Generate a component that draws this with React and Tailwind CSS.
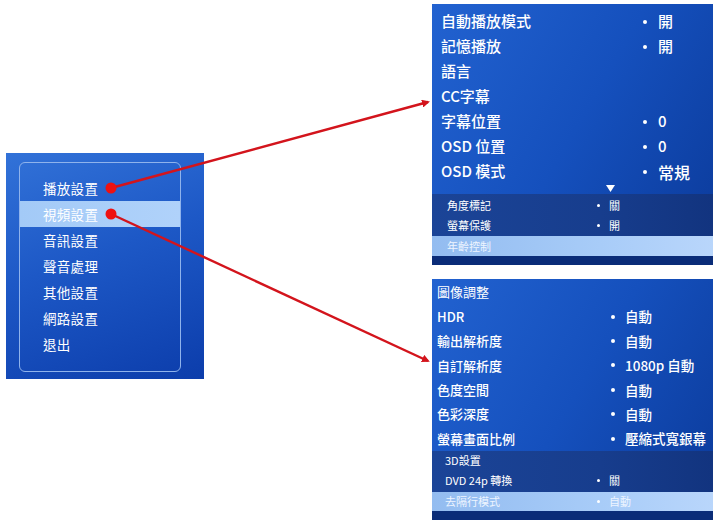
import React from "react";

const font = { fontFamily: '"Noto Sans CJK TC", "Noto Sans", sans-serif' };

const mainMenu = ["播放設置", "視頻設置", "音訊設置", "聲音處理", "其他設置", "網路設置", "退出"];

const playRows = [
  { label: "自動播放模式", value: "開" },
  { label: "記憶播放", value: "開" },
  { label: "語言" },
  { label: "CC字幕" },
  { label: "字幕位置", value: "0" },
  { label: "OSD 位置", value: "0" },
  { label: "OSD 模式", value: "常規", big: true },
];

const videoRows = [
  { label: "圖像調整" },
  { label: "HDR", value: "自動" },
  { label: "輸出解析度", value: "自動" },
  { label: "自訂解析度", value: "1080p 自動" },
  { label: "色度空間", value: "自動" },
  { label: "色彩深度", value: "自動" },
  { label: "螢幕畫面比例", value: "壓縮式寬銀幕" },
];

const Dot = () => <span className="inline-block w-[4px] h-[4px] rounded-full bg-white" />;

const SubRow = ({ label, value, h, pl, active }) => (
  <div
    className={`flex items-center text-[11px] ${h} ${
      active ? "bg-[linear-gradient(90deg,#93bcf0,#a8ccf8_60%,#b9d6fb)] text-[#eef5ff]" : "text-white"
    }`}
  >
    <span className={`w-[165px] shrink-0 ${pl}`}>{label}</span>
    {value && (
      <span className="flex items-center">
        <span className="inline-block w-[3px] h-[3px] rounded-full bg-white" />
        <span className="ml-[9px]">{value}</span>
      </span>
    )}
  </div>
);

export default function App() {
  return (
    <div className="relative w-[720px] h-[523px] bg-white flex overflow-hidden" style={font}>
      {/* left main menu */}
      <div className="ml-[6px] mt-[153px] w-[198px] h-[226px] pl-[13px] pt-[9px] bg-[linear-gradient(160deg,#3272d8,#1d58c6_45%,#0c3dab)]">
        <div className="w-[162px] h-[210px] rounded-[6px] border border-[#8fb3ec] pt-[12px]">
          {mainMenu.map((m, i) => (
            <div
              key={m}
              className={`h-[26px] flex items-center pl-[23px] text-[13.5px] tracking-[0.3px] text-white ${
                i === 1 ? "bg-[linear-gradient(90deg,#a3caf7,#b0d2fa)]" : ""
              }`}
            >
              {m}
            </div>
          ))}
        </div>
      </div>

      {/* right column */}
      <div className="ml-[228px] mt-[4px] w-[281px] flex flex-col gap-[14px]">
        <div className="h-[261px] flex flex-col bg-[linear-gradient(120deg,#2262d0,#1550bd_50%,#0b3a9a)]">
          <div className="pt-[5px]">
            {playRows.map((r) => (
              <div key={r.label} className="flex items-center text-white h-[25px]">
                <span className="pl-[9px] w-[211px] shrink-0 text-[15px] font-medium">{r.label}</span>
                {r.value && (
                  <span className="flex items-center">
                    <Dot />
                    <span className={`ml-[11px] font-medium ${r.big ? "text-[16px]" : "text-[15px]"}`}>{r.value}</span>
                  </span>
                )}
              </div>
            ))}
          </div>
          <div className="h-[10px] flex justify-center pl-[76px]">
            <svg width="9" height="7" viewBox="0 0 9 7" className="mt-[1px]">
              <path d="M0 0h9L4.5 7z" fill="#fff" />
            </svg>
          </div>
          <div className="flex-1 flex flex-col bg-[linear-gradient(90deg,#1b4497,#173d8d_60%,#12347f)]">
            <SubRow label="角度標記" value="關" h="h-[21px] pt-[2px]" pl="pl-[15px]" />
            <SubRow label="螢幕保護" value="開" h="h-[21px]" pl="pl-[15px]" />
            <SubRow label="年齡控制" h="h-[20px]" pl="pl-[15px]" active />
            <div className="flex-1 bg-[#0a2c78]" />
          </div>
        </div>

        <div className="h-[241px] flex flex-col bg-[linear-gradient(120deg,#2262d0,#1550bd_50%,#0b3a9a)]">
          <div className="pt-[1px]">
            {videoRows.map((r, i) => (
              <div key={r.label} className="flex items-center text-white h-[24.4px]">
                <span className={`pl-[5px] w-[179px] shrink-0 text-[13px] ${i === 0 ? "" : "font-medium"}`}>
                  {r.label}
                </span>
                {r.value && (
                  <span className="flex items-center">
                    <Dot />
                    <span className="ml-[10px] text-[13.5px] font-medium">{r.value}</span>
                  </span>
                )}
              </div>
            ))}
          </div>
          <div className="flex-1 flex flex-col bg-[linear-gradient(90deg,#1b4497,#173d8d_60%,#12347f)]">
            <SubRow label="3D設置" h="h-[19px] pt-[1px]" pl="pl-[13px]" />
            <SubRow label="DVD 24p 轉換" value="關" h="h-[22px]" pl="pl-[13px]" />
            <SubRow label="去隔行模式" value="自動" h="h-[19px]" pl="pl-[13px]" active />
            <div className="flex-1 bg-[#0a2c78]" />
          </div>
        </div>
      </div>

      {/* callout arrows */}
      <svg className="absolute inset-0 pointer-events-none" width="720" height="523" viewBox="0 0 720 523">
        <defs>
          <marker id="ah" markerWidth="8" markerHeight="8" refX="6" refY="4" orient="auto" markerUnits="userSpaceOnUse">
            <path d="M0 0L8 4L0 8z" fill="#d3141c" />
          </marker>
        </defs>
        <line x1="111" y1="188" x2="428" y2="102" stroke="#d3141c" strokeWidth="2.4" markerEnd="url(#ah)" />
        <line x1="111" y1="214" x2="428" y2="361" stroke="#d3141c" strokeWidth="2.4" markerEnd="url(#ah)" />
        <circle cx="111" cy="188" r="5.5" fill="#ee1111" />
        <circle cx="111" cy="214" r="5.5" fill="#ee1111" />
      </svg>
    </div>
  );
}
